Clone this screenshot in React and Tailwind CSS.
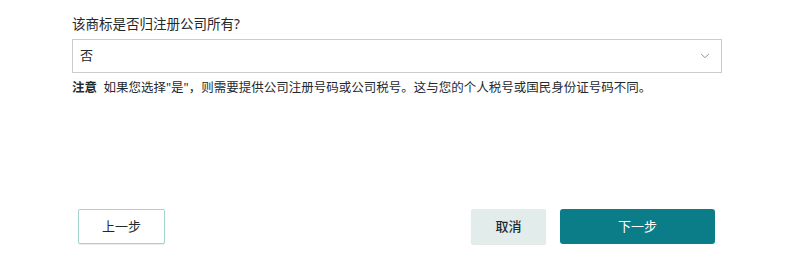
import React from "react";
import { ChevronDown } from "lucide-react";

const font = { fontFamily: '"Noto Sans", "Noto Sans CJK SC", sans-serif' };

export default function App() {
  return (
    <div className="w-[789px] h-[253px] bg-white text-[#1f2a2e]" style={font}>
      <div className="pl-[72px] pr-[67px] pt-[14px]">
        <label className="block text-[13.5px] leading-[20px] text-[#22292b]">该商标是否归注册公司所有?</label>
        <div className="mt-[5px] h-[34px] border border-[#c9cccc] flex items-center justify-between pl-[7px] pr-[9px]">
          <span className="text-[13px] text-[#22292b]">否</span>
          <ChevronDown className="w-[14px] h-[14px] text-[#7a8285]" strokeWidth={1.5} />
        </div>
        <p className="mt-[5px] text-[12.5px] leading-[20px] text-[#1f2a2e]">
          <span className="font-bold">注意</span>&nbsp; 如果您选择"是"，则需要提供公司注册号码或公司税号。这与您的个人税号或国民身份证号码不同。
        </p>
      </div>
      <div className="mt-[111px] pl-[78px] pr-[74px] flex items-center justify-between">
        <button className="w-[87px] h-[35px] border border-[#a3d3cd] rounded-[2px] text-[13px] text-[#1f2a2e] bg-white shadow-[0_1px_1px_rgba(0,0,0,0.08)]">
          上一步
        </button>
        <div className="flex items-center gap-[14px]">
          <button className="w-[75px] h-[35px] rounded-[2px] bg-[#e2eceb] text-[13px] font-medium text-[#1f2a2e] shadow-[0_1px_1px_rgba(0,0,0,0.1)]">
            取消
          </button>
          <button className="w-[155px] h-[35px] rounded-[3px] bg-[#0b7d88] text-[13px] text-white">
            下一步
          </button>
        </div>
      </div>
    </div>
  );
}
